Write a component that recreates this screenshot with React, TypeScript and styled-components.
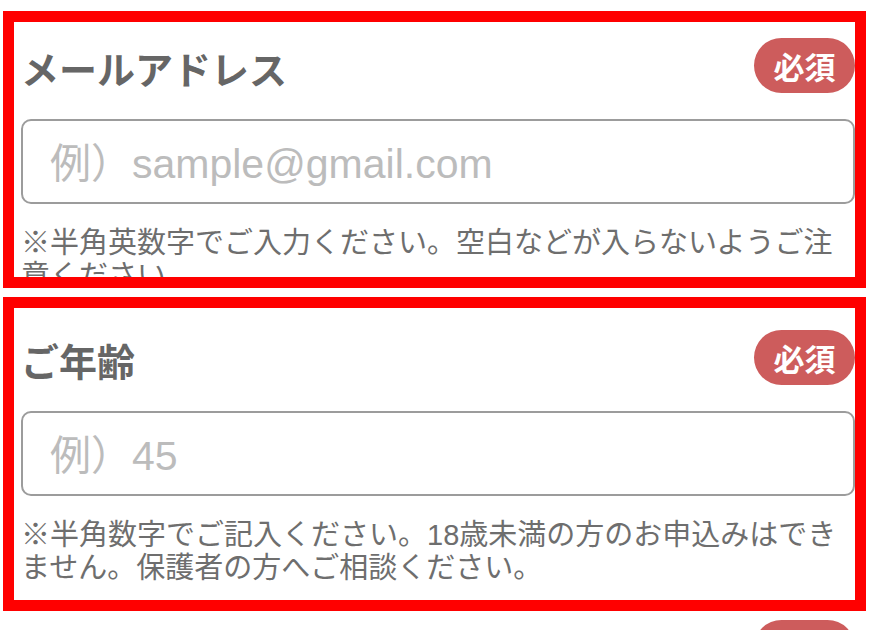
import styled, { createGlobalStyle } from 'styled-components'

const GlobalStyle = createGlobalStyle`
  html,
  body {
    margin: 0;
    padding: 0;
    background: #fff;
  }

  body {
    font-family: 'Liberation Sans', 'Noto Sans CJK JP', sans-serif;
    color: #666;
  }
`

type FieldProps = {
  label: string
  placeholder: string
  note: string
  type?: string
}

const Field = ({ label, placeholder, note, type = 'text' }: FieldProps) => (
  <FieldBody>
    <FieldHeader>
      <FieldTitle>{label}</FieldTitle>
      <RequiredBadge>必須</RequiredBadge>
    </FieldHeader>
    <TextInput type={type} placeholder={placeholder} />
    {note && <FieldNote>{note}</FieldNote>}
  </FieldBody>
)

const App = () => {
  return (
    <>
      <GlobalStyle />
      <Page>
        <Frame $height={277} $inset={16}>
          <Field
            label="メールアドレス"
            type="email"
            placeholder="例）sample@gmail.com"
            note="※半角英数字でご入力ください。空白などが入らないようご注意ください。"
          />
        </Frame>
        <Frame $height={314} $inset={22}>
          <Field
            label="ご年齢"
            placeholder="例）45"
            note="※半角数字でご記入ください。18歳未満の方のお申込みはできません。保護者の方へご相談ください。"
          />
        </Frame>
        {/* next field, only its badge shows above the fold */}
        <Frame $height={40} $inset={0} $outlined={false}>
          <Field label="お名前" placeholder="例）山田 太郎" note="" />
        </Frame>
      </Page>
    </>
  )
}

export default App

const Page = styled.div`
  display: flex;
  flex-direction: column;
  gap: 9px;
  padding: 11px 6px 0 3px;
  height: 630px;
  box-sizing: border-box;
  overflow: hidden;
`

const Frame = styled.section<{ $height: number; $inset: number; $outlined?: boolean }>`
  flex: none;
  box-sizing: border-box;
  height: ${({ $height }) => $height}px;
  border: 11px solid ${({ $outlined = true }) => ($outlined ? '#ff0000' : 'transparent')};
  border-top-width: ${({ $outlined = true }) => ($outlined ? 11 : 0)}px;
  padding: ${({ $inset }) => $inset}px 0 0 7px;
  overflow: ${({ $outlined = true }) => ($outlined ? 'hidden' : 'visible')};
`

const FieldBody = styled.div`
  display: flex;
  flex-direction: column;
`

const FieldHeader = styled.div`
  display: flex;
  align-items: flex-start;
  justify-content: space-between;
`

const FieldTitle = styled.h2`
  margin: 7px 0 0 0;
  font-family: 'Noto Sans CJK JP', sans-serif;
  font-size: 38px;
  line-height: 45px;
  font-weight: 700;
  color: #666;
`

const RequiredBadge = styled.span`
  display: flex;
  align-items: center;
  justify-content: center;
  width: 101px;
  height: 55px;
  border-radius: 28px;
  background: #cd5c5c;
  color: #fff;
  font-family: 'Noto Sans CJK JP', sans-serif;
  font-size: 31px;
  font-weight: 700;
`

const TextInput = styled.input`
  margin-top: 26px;
  box-sizing: border-box;
  width: 100%;
  height: 85px;
  padding: 5px 27px 0;
  border: 2px solid #9c9c9c;
  border-radius: 10px;
  background: #fff;
  font-family: 'Liberation Sans', 'Noto Sans CJK JP', sans-serif;
  font-size: 41px;
  color: #444;
  outline: none;

  &::placeholder {
    color: #bcbcbc;
  }
`

const FieldNote = styled.p`
  margin: 23px 0 0 0;
  font-family: 'Liberation Sans', 'Noto Sans CJK JP', sans-serif;
  font-size: 29px;
  line-height: 33px;
  color: #6e6e6e;
`
